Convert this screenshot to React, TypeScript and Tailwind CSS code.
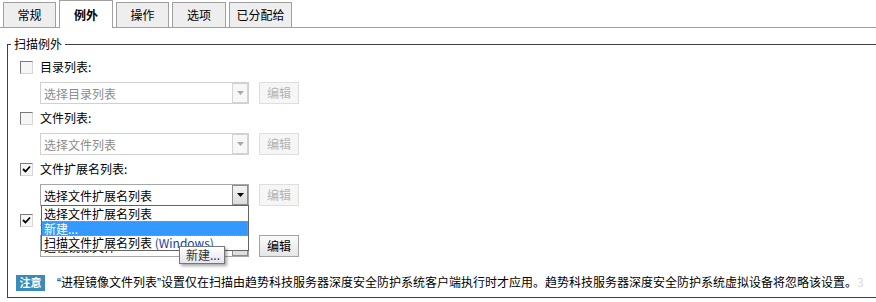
import React from 'react'

function Tab({ label, active, w }: { label: string; active?: boolean; w: string }) {
  if (active) {
    return (
      <div className={`${w} h-[28px] -mb-px bg-white border border-b-0 border-[#a0a0a0] flex items-center justify-center font-bold text-[12px] text-black`}>
        {label}
      </div>
    )
  }
  return (
    <div className={`${w} h-[25px] bg-[#eeeeee] border border-b-0 border-[#a0a0a0] flex items-center justify-center text-[12px] text-black`}>
      {label}
    </div>
  )
}

function Checkbox({ checked }: { checked?: boolean }) {
  return (
    <div className="w-[13px] h-[13px] border border-t-[#7a7a7a] border-l-[#7a7a7a] border-r-[#d6d6d6] border-b-[#d6d6d6] bg-[#f6f6f6] flex items-center justify-center">
      {checked && (
        <svg width="9" height="9" viewBox="0 0 9 9">
          <path d="M1 4 L3.5 6.5 L8 1.5" fill="none" stroke="#000" strokeWidth="1.8" />
        </svg>
      )}
    </div>
  )
}

function Select({ text, disabled }: { text: string; disabled?: boolean }) {
  return (
    <div
      className={`w-[209px] h-[22px] border flex items-center justify-between pl-[3px] ${
        disabled ? 'border-[#d0d0d0] text-[#8c8c8c] bg-white' : 'border-[#a6a6a6] text-black bg-white'
      }`}
    >
      <span className="leading-[16px] pt-[2px]">{text}</span>
      <div
        className={`w-[16px] h-[20px] border flex items-center justify-center ${
          disabled ? 'border-[#d4d4d4] bg-[#f7f7f7]' : 'border-[#8c8c8c] bg-gradient-to-b from-[#f4f4f4] to-[#dcdcdc]'
        }`}
      >
        <svg width="7" height="4" viewBox="0 0 7 4">
          <path d="M0 0 H7 L3.5 4 Z" fill={disabled ? '#a8a8a8' : '#000'} />
        </svg>
      </div>
    </div>
  )
}

function EditButton({ disabled }: { disabled?: boolean }) {
  return (
    <div
      className={`w-[40px] h-[22px] border flex items-center justify-center text-[12px] ${
        disabled
          ? 'border-[#dedede] bg-[#f6f6f6] text-[#b4b4b4]'
          : 'border-[#a3a3a3] bg-gradient-to-b from-[#fafafa] to-[#e6e6e6] text-black'
      }`}
    >
      编辑
    </div>
  )
}

function Group({
  label,
  checked,
  selectText,
  disabled,
  buttonDisabled,
  overlay,
}: {
  label: string
  checked?: boolean
  selectText: string
  disabled?: boolean
  buttonDisabled?: boolean
  overlay?: React.ReactNode
}) {
  return (
    <div className="flex flex-col mb-[4px]">
      <div className="h-[20px] flex items-center gap-[7px]">
        <Checkbox checked={checked} />
        <span className="leading-[16px]">{label}</span>
      </div>
      <div className="mt-[5px] ml-[20px] flex gap-[10px]">
        <div className="relative">
          <Select text={selectText} disabled={disabled} />
          {overlay}
        </div>
        <EditButton disabled={buttonDisabled ?? disabled} />
      </div>
    </div>
  )
}

export default function App() {
  const dropdown = (
    <>
      <div className="absolute z-10 top-[21px] left-[1px] w-[208px] bg-white border border-[#646464] flex flex-col">
        <div className="h-[15px] leading-[15px] pl-[2px] text-black">选择文件扩展名列表</div>
        <div className="h-[15px] leading-[13px] pl-[1px] bg-[#3399ff] text-white border border-dotted border-[#e08a2c]">新建...</div>
        <div className="h-[14px] leading-[14px] pl-[2px] text-black">
          扫描文件扩展名列表 <span className="text-[#1a3f9c]">(Windows)</span>
        </div>
      </div>
      <div className="absolute z-20 top-[62px] left-[139px] w-[46px] h-[18px] border border-[#767676] bg-gradient-to-b from-white to-[#e4e5f0] shadow-[2px_2px_3px_rgba(0,0,0,0.35)] flex items-center pl-[6px] text-[#333] text-[12px] leading-[14px]">
        新建...
      </div>
    </>
  )

  return (
    <div className="w-[876px] h-[302px] bg-white overflow-hidden font-['Noto_Sans_CJK_SC','Noto_Sans',sans-serif] text-[12px] text-black">
      <div className="flex items-end h-[28px] border-b border-[#a0a0a0] pl-[3px] gap-[3px]">
        <Tab label="常规" w="w-[53px]" />
        <Tab label="例外" w="w-[54px]" active />
        <Tab label="操作" w="w-[53px]" />
        <Tab label="选项" w="w-[54px]" />
        <Tab label="已分配给" w="w-[63px]" />
      </div>

      <fieldset className="mt-[8px] ml-[7px] h-[262px] border border-r-0 border-[#404040]">
        <legend className="ml-[3px] px-[3px] leading-[16px]">扫描例外</legend>
        <div className="pt-[5px] pl-[12px]">
          <Group label="目录列表:" selectText="选择目录列表" disabled />
          <Group label="文件列表:" selectText="选择文件列表" disabled />
          <Group label="文件扩展名列表:" selectText="选择文件扩展名列表" checked buttonDisabled overlay={dropdown} />
          <Group label="进程镜像文件列表:" selectText="进程镜像文件" checked />
        </div>
        <div className="mt-[17px] pl-[8px] flex items-center gap-[12px]">
          <span className="w-[29px] h-[16px] bg-[#3b8bba] text-white text-[11px] font-bold flex items-center justify-center">
            注意
          </span>
          <span className="leading-[16px] whitespace-nowrap">
            <span className="font-['Liberation_Sans',sans-serif]">“</span>进程镜像文件列表
            <span className="font-['Liberation_Sans',sans-serif]">”</span>设置仅在扫描由趋势科技服务器深度安全防护系统客户端执行时才应用。趋势科技服务器深度安全防护系统虚拟设备将忽略该设置。
            <span className="text-[#d8d8d8]">3</span>
          </span>
        </div>
      </fieldset>
    </div>
  )
}
